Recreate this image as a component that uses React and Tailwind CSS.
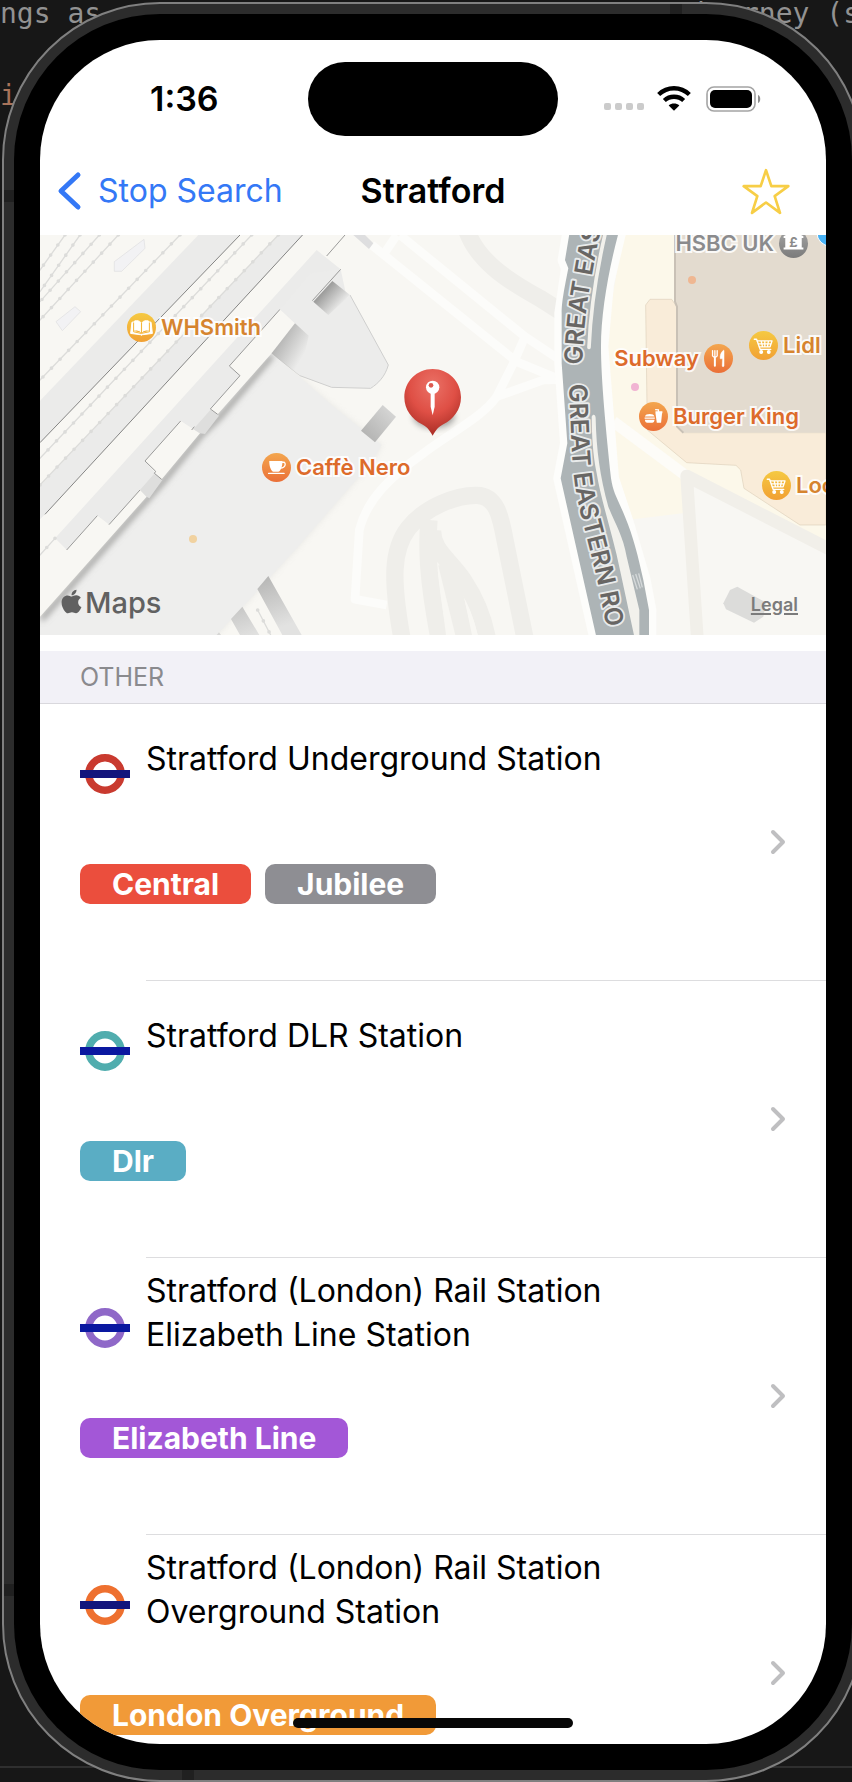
import React from "react";
import { FaApple } from "react-icons/fa";

const railLines = [
  "M105 15L30 120",
  "M150 15L30 185",
  "M208 15L30 215",
  "M265 15L30 270",
  "M450 15L30 450",
  "M665 15L30 685",
  "M745 15L30 765",
  "M75 925L30 975",
  "M683 1140L722 1215",
];

function MapDrawing() {
  return (
    <svg
      className="block h-full w-full"
      viewBox="0 0 786 400"
      preserveAspectRatio="xMidYMid slice"
      aria-hidden="true"
    >
      <defs>
        <filter id="soft" x="-20%" y="-20%" width="140%" height="140%">
          <feGaussianBlur stdDeviation="9" />
        </filter>
        <linearGradient id="stair" x1="0" y1="0" x2="0.5" y2="1">
          <stop offset="0" stopColor="#a9a9a8" />
          <stop offset="1" stopColor="#e2e2e1" />
        </linearGradient>
        <linearGradient id="kiosk" x1="0" y1="1" x2="1" y2="0">
          <stop offset="0" stopColor="#adadac" />
          <stop offset="1" stopColor="#dcdcdb" />
        </linearGradient>
        <linearGradient id="notch" x1="0.1" y1="0.3" x2="0.7" y2="0.8">
          <stop offset="0" stopColor="#8b8b8a" />
          <stop offset="1" stopColor="#ececeb" />
        </linearGradient>
        <radialGradient id="pin" cx="0.5" cy="0.25" r="0.75">
          <stop offset="0" stopColor="#ea7166" />
          <stop offset="0.55" stopColor="#df4f45" />
          <stop offset="1" stopColor="#a92d25" />
        </radialGradient>
        <path id="roadNorth" d="M157 404C158 330 166 250 178 180S198 60 226 -60" />
        <path id="roadSouth" d="M117 463C121 540 122 640 131 730S158 870 186 985S214 1120 240 1240" />
      </defs>
      <rect width="786" height="400" fill="#f8f7f3" />

      {/* Plaza, footpaths and car park loop */}
      <g transform="translate(210 -5) scale(.333333)" fill="none">
        <g stroke="#fcfcfa" strokeWidth="26" strokeLinejoin="round">
          <path d="M365 45L800 395L970 465" />
          <path d="M450 15L825 320L960 410M440 15L400 75" />
          <path d="M825 320L790 400L740 500C700 560 590 615 520 670C420 740 350 810 328 900L315 1108L410 1125" />
          <path d="M740 500L880 450L960 448" />
        </g>
        <g stroke="#efeeea" strokeWidth="52">
          <path d="M650 0C680 90 770 150 870 205L960 262" />
          <path d="M455 1220C425 1050 425 960 475 895S620 795 680 796S752 860 765 930L825 1225" />
          <path d="M537 870C530 950 532 1040 567 1225" />
          <path d="M548 900C545 960 600 990 640 1050S700 1160 712 1225" />
          <path d="M590 1000L645 1225" />
        </g>
        <path d="M563 1018L612 1215H588Z" fill="#f8f7f3" />
        <path d="M643 1105C665 1145 675 1185 683 1215H666Z" fill="#f8f7f3" />
      </g>

      {/* Station platforms */}
      <g transform="translate(-10 -5) scale(.333333)">
        <path d="M505 15H630L30 638V512Z" fill="#ebebea" />
        <path d="M745 15H820L45 853L75 880L30 925V768Z" fill="#ebebea" />
        <path d="M45 853L860 -30L990 -30L30 975V868Z" fill="#f8f7f3" />
        <path d="M253 95L342 28L345 55L275 124H253ZM78 275L135 230L152 245L97 302Z" fill="#f2f2f4" stroke="#dededf" strokeWidth="2" />
        <path
          d="M30 1165L350 800L395 750L510 610L565 555L725 370L805 437L905 525L1055 645L1030 690L800 955L560 1215H30Z"
          fill="#c4c4c2"
          filter="url(#soft)"
          opacity=".3"
        />
        <path d="M30 1165L350 800L510 610L725 370L805 437L905 525L1055 645L1030 690L800 955L560 1215H30Z" fill="#eeeeed" />
        <path
          d="M34 1168L354 806L400 754L514 614L570 560L727 376"
          fill="none"
          stroke="#8d8d8b"
          strokeWidth="13"
          filter="url(#soft)"
        />
        <path
          d="M860 60L75 925L110 960L202 857L237 884L330 780L350 800L395 750L345 693L452 573L490 600L510 610L565 555L541 537L630 437L598 408L750 238L795 280L850 320L960 250L932 118Z"
          fill="#ebebea"
        />
        <path d="M75 925L110 960L202 857L237 884L330 780L350 800L30 1160V975Z" fill="#f8f7f3" />
        <path d="M452 573L345 693L395 748L510 610ZM630 437L541 537L563 553L725 370L797 284L750 238L598 408Z" fill="#f8f7f3" />
        <path d="M510 610L490 598L541 540L567 557L525 612ZM350 800L330 780L372 732L397 750L358 805Z" fill="#dededd" />
        <g fill="none" stroke="#9a9a99" strokeWidth="3">
          <path d="M630 15L30 638M824 8L45 853" stroke="#858584" />
          <path d="M110 960L202 857M237 884L330 780M395 748L373 730L377 724L345 693L452 573M485 600L493 590" />
          <path d="M563 553L541 537L630 437L598 408L750 238" />
        </g>
        <g fill="none" stroke="#dcdcda" strokeLinecap="round">
          {railLines.map((d) => (
            <g key={d}>
              <path d={d} strokeWidth="4" />
              <path d={d} strokeWidth="11" strokeDasharray="0 37" />
            </g>
          ))}
        </g>
        <path d="M682 1077L715 1038L815 1215H757ZM603 1167L637 1130L688 1215H630ZM560 1215L567 1207L573 1215Z" fill="url(#stair)" />
      </g>
      <g transform="translate(210 -5) scale(.333333)">
        <path d="M272 118L190 213L235 255L300 195L415 405C405 440 385 460 362 475L245 472L150 437L65 370L135 280L90 238L180 130Z" fill="#ececeb" />
        <path d="M300 195L415 405C405 440 385 460 362 475L245 472L150 437L65 370" fill="none" stroke="#cfcfce" strokeWidth="3" />
        <path d="M190 215L247 153L300 195L235 255Z" fill="url(#notch)" />
        <path d="M65 370L135 280L176 317L150 437Z" fill="url(#notch)" opacity=".65" />
        <path d="M187 212L272 118M230 78L285 15" stroke="#9a9a99" strokeWidth="3" />
        <path d="M310 15H345L370 40L357 57Z" fill="#dededf" />
        <path d="M333 602L398 525L438 560L375 637Z" fill="url(#kiosk)" />
      </g>

      {/* Shops and the main road */}
      <g transform="translate(490 -5) scale(.333333)">
        <path d="M280 15H888V965L480 750L470 848L310 868L230 740V300Z" fill="#fcf8ea" />
        <path d="M347 225L360 208H425L440 230V590L460 608H888V885H810L642 775L632 720L618 706L470 698L352 600Z" fill="#f9ecd9" stroke="#ded0bb" strokeWidth="2" />
        <path d="M432 15H888V608H460L440 590V230L432 215Z" fill="#e3dbcf" />
        <path d="M435 15V215L441 230V590L460 608" fill="none" stroke="#c9c1b6" strokeWidth="6" />
        <path d="M250 575L465 735" stroke="#fdfcf8" strokeWidth="34" />
        <path d="M502 1225L470 738L900 958" fill="none" stroke="#f1efe9" strokeWidth="38" strokeLinejoin="round" />
        <path d="M580 1120L600 1080L622 1070L708 1118L700 1160L672 1178L588 1138Z" fill="#dcdcda" />
        <path
          d="M120 0L105 90L115 115L95 250V400L112 640L92 745L200 1225H357V1140L340 1050L290 880L245 745L213 350L230 160L268 0Z"
          fill="#adb4b6"
          stroke="#fdfdfb"
          strokeWidth="44"
          strokeLinejoin="round"
        />
        <path
          d="M120 0L105 90L115 115C100 190 95 220 95 250V400L112 640L92 745L200 1225H357V1140L340 1050C325 980 310 920 285 860S250 790 243 745C228 600 213 450 213 350S235 120 268 0Z"
          fill="#adb4b6"
        />
        <path d="M228 0C200 120 182 230 177 352" fill="none" stroke="#f2f1ec" strokeWidth="11" strokeLinecap="round" />
        <path d="M185 560C190 550 197 555 197 565C199 660 210 740 235 830C255 880 280 920 290 980L328 1140V1225H314L270 1020C250 920 215 820 200 730C188 670 186 620 185 560Z" fill="#f2f1ec" />
        <path d="M308 1035L322 1078M317 1032L331 1075M326 1030L337 1072" stroke="#d5d9da" strokeWidth="4" />
        <g
          fill="#686664"
          stroke="#e9ebeb"
          strokeWidth="11"
          strokeLinejoin="round"
          paintOrder="stroke"
          className="font-['Inter',sans-serif] text-[75px] font-semibold"
        >
          <text>
            <textPath href="#roadNorth">GREAT EAS</textPath>
          </text>
          <text>
            <textPath href="#roadSouth">GREAT EASTERN RO</textPath>
          </text>
        </g>
      </g>

      <circle cx="153" cy="304" r="4" fill="#f1d2a0" />
      <circle cx="652" cy="45" r="4" fill="#efb792" />
      <circle cx="595" cy="152" r="4" fill="#f1b4d3" />
      <circle cx="790" cy="-2" r="13" fill="#47b2f5" stroke="#fff" strokeWidth="1" />

      {/* Station pin */}
      <g transform="translate(210 -5) scale(.333333)">
        <ellipse cx="552" cy="560" rx="62" ry="34" fill="#000" opacity=".35" filter="url(#soft)" />
        <path d="M548 417C596 417 633 455 633 502C633 540 610 568 580 583C562 592 556 604 548 617C540 604 534 592 516 583C486 568 463 540 463 502C463 455 500 417 548 417Z" fill="url(#pin)" />
        <path d="M542 486H554V530L548 556L542 530Z" fill="#fff" />
        <circle cx="548" cy="472" r="20" fill="#fff" />
        <circle cx="543" cy="466" r="7" fill="#dd5a50" />
      </g>
    </svg>
  );
}

const glyphs = {
  book: (
    <g fill="#fff" stroke="#fff" strokeWidth="3" strokeLinejoin="round">
      <path d="M15 28L11 62L42 66L44 68L46 66L77 62L73 28L67 27V56L44 62L21 56V27Z" />
      <path d="M23 24C31 22 38 24 42 29V57C37 52 30 51 23 52ZM65 24C57 22 50 24 46 29V57C51 52 58 51 65 52Z" fill="#fff" />
      <path d="M20 29V57L43 62L68 57V29M44 30V60" fill="none" stroke="#f4b63a" strokeWidth="3" />
    </g>
  ),
  cup: (
    <g fill="#fff">
      <path d="M22 24H62C62 40 58 52 50 57H34C26 52 22 40 22 24Z" />
      <path d="M60 28H66C73 28 73 46 56 46" fill="none" stroke="#fff" strokeWidth="4" />
      <path d="M20 62H67" stroke="#fff" strokeWidth="4" strokeLinecap="round" />
    </g>
  ),
  cutlery: (
    <g fill="none" stroke="#fff" strokeLinecap="round">
      <path d="M26 20V36Q33 45 40 36V20M33 20V40" strokeWidth="4" />
      <path d="M33 42V66" strokeWidth="6" />
      <path d="M58 20C50 26 48 36 49 45H56L55 66C55 70 61 70 61 66V20Q60 18 58 20Z" fill="#fff" strokeWidth="1" />
    </g>
  ),
  cart: (
    <g fill="none" stroke="#fff" strokeWidth="4" strokeLinecap="round" strokeLinejoin="round">
      <path d="M16 25H23L34 56H66" />
      <path d="M25 30H70L64 48H31M28 39H67M37 30L41 48M48 30V48M59 30L56 48" strokeWidth="4" />
      <circle cx="37" cy="64" r="4" fill="#fff" />
      <circle cx="60" cy="64" r="4" fill="#fff" />
    </g>
  ),
  burger: (
    <g fill="#fff">
      <path d="M18 44C19 34 46 34 47 44ZM17 47H48V51H17ZM18 54H47C47 60 44 63 40 63H25C21 63 18 60 18 54Z" />
      <path d="M50 28H71V34H70L67 63H54L50 34Z" />
      <path d="M49 23L59 24V30" fill="none" stroke="#fff" strokeWidth="4" />
    </g>
  ),
  bank: (
    <g fill="#fff">
      <path d="M14 22L44 6L74 22V27H69V56H74V62H14V56H19V27H14Z" />
      <text x="44" y="56" textAnchor="middle" fill="#8b8b8b" className="font-['Inter',sans-serif] text-[40px] font-bold">
        £
      </text>
    </g>
  ),
};

const badgeFill = {
  gold: "bg-linear-to-b from-[#f5c942] to-[#f1a033]",
  orange: "bg-linear-to-b from-[#f3a64e] to-[#ea6f38]",
  gray: "bg-linear-to-b from-[#a5a5a5] to-[#7b7b7b]",
};

const places = [
  { name: "WHSmith", icon: "book", fill: "gold", place: "left-[87px] top-[78px] text-[#d6842f]" },
  { name: "Caffè Nero", icon: "cup", fill: "orange", place: "left-[222px] top-[218px] text-[#dd6b2b]" },
  { name: "Subway", icon: "cutlery", fill: "orange", place: "right-[93px] top-[109px] flex-row-reverse text-[#dd6b2b]" },
  { name: "Lidl", icon: "cart", fill: "gold", place: "left-[709px] top-[96px] text-[#d6842f]" },
  { name: "Burger King", icon: "burger", fill: "orange", place: "left-[599px] top-[167px] text-[#dd6b2b]" },
  { name: "Loc", icon: "cart", fill: "gold", place: "left-[722px] top-[236px] text-[#d6842f]" },
  { name: "HSBC UK", icon: "bank", fill: "gray", place: "right-[18px] -top-[6px] flex-row-reverse text-[#8b8b8d]" },
];

function StationMap() {
  return (
    <section aria-label="Map" className="relative h-[400px] overflow-hidden">
      <MapDrawing />
      {places.map((p) => (
        <div
          key={p.name}
          className={`absolute flex items-center gap-[5px] text-[22px] leading-[29px] font-semibold whitespace-nowrap ${p.place}`}
        >
          <span className={`size-[29px] shrink-0 rounded-full ${badgeFill[p.fill]}`}>
            <svg viewBox="0 0 88 88" className="size-full" aria-hidden="true">
              {glyphs[p.icon]}
            </svg>
          </span>
          <span className="[-webkit-text-stroke:4px_#ffffffd9] [paint-order:stroke]">{p.name}</span>
        </div>
      ))}
      <div className="absolute bottom-3 left-[18px] flex items-center text-[29px] leading-10 font-medium text-[#616161]">
        <FaApple className="mb-1 size-[27px]" aria-hidden="true" />
        Maps
      </div>
      <a
        href="#legal"
        className="absolute right-7 bottom-4 text-[18px] leading-7 font-semibold text-[#7b7b7b] underline decoration-2 underline-offset-2"
      >
        Legal
      </a>
    </section>
  );
}

const stops = [
  {
    id: "underground",
    name: "Stratford Underground Station",
    ring: "#c93a2f",
    bar: "#13157c",
    lines: [
      { name: "Central", color: "bg-[#eb4e3d]" },
      { name: "Jubilee", color: "bg-[#8e8e93]" },
    ],
  },
  {
    id: "dlr",
    name: "Stratford DLR Station",
    ring: "#50adae",
    bar: "#0a18a0",
    lines: [{ name: "Dlr", color: "bg-[#5aadc4]" }],
  },
  {
    id: "elizabeth",
    name: "Stratford (London) Rail Station Elizabeth Line Station",
    ring: "#8f68c8",
    bar: "#0a18a0",
    lines: [{ name: "Elizabeth Line", color: "bg-[#a357d7]" }],
  },
  {
    id: "overground",
    name: "Stratford (London) Rail Station Overground Station",
    ring: "#ee702f",
    bar: "#13157c",
    lines: [{ name: "London Overground", color: "bg-[#f19a38]" }],
  },
];

function Roundel({ ring, bar }) {
  return (
    <svg viewBox="0 0 50 40" className="mt-[50px] h-10 w-[50px] shrink-0" aria-hidden="true">
      <circle cx="25" cy="20" r="16.2" fill="none" stroke={ring} strokeWidth="7.4" />
      <rect y="16" width="50" height="8" fill={bar} />
    </svg>
  );
}

function StopRow({ stop, last }) {
  return (
    <li>
      <a href={`#${stop.id}`} className="flex pl-10 text-black">
        <div className="flex min-w-0 flex-1 flex-col">
          <div className="flex gap-4">
            <Roundel ring={stop.ring} bar={stop.bar} />
            <h3 className="flex min-h-[110px] max-w-[500px] items-center text-[32px] leading-11">{stop.name}</h3>
          </div>
          <div className="mt-[50px] flex gap-3.5">
            {stop.lines.map((line) => (
              <span
                key={line.name}
                className={`rounded-[10px] px-8 text-[30px] leading-10 font-bold text-white ${line.color}`}
              >
                {line.name}
              </span>
            ))}
          </div>
          {last ? <div className="h-[9px]" /> : <div className="mt-[76px] ml-[66px] h-px bg-[#dddddf]" />}
        </div>
        <div className="flex flex-col">
          <svg
            viewBox="0 0 16 26"
            className="mt-[125px] mr-10 h-[26px] w-4"
            fill="none"
            stroke="#bfbfc1"
            strokeWidth="4"
            strokeLinecap="round"
            strokeLinejoin="round"
            aria-hidden="true"
          >
            <path d="M3 3L13 13L3 23" />
          </svg>
          {last ? null : <div className="mt-auto h-px bg-[#dddddf]" />}
        </div>
      </a>
    </li>
  );
}

function StatusBar() {
  return (
    <div className="flex h-[119px] items-center justify-between pb-0.5">
      <div className="w-[268px] pl-[110px] text-[34px] leading-10 font-semibold">1:36</div>
      <div className="h-[74px] w-[250px] rounded-full bg-black" />
      <div className="flex w-[268px] items-center justify-end pr-[65px]">
        <div className="mt-4 mr-[13px] flex gap-1">
          <i className="size-[7px] rounded-xs bg-[#cbcbcb]" />
          <i className="size-[7px] rounded-xs bg-[#cbcbcb]" />
          <i className="size-[7px] rounded-xs bg-[#cbcbcb]" />
          <i className="size-[7px] rounded-xs bg-[#cbcbcb]" />
        </div>
        <svg viewBox="0 0 102 74" className="mr-[15px] h-[25px] w-[34px]" aria-hidden="true">
          <g fill="none" stroke="#000" strokeWidth="13">
            <path d="M5 25C31 0 71 0 97 25" />
            <path d="M22 43C38 28 64 28 80 43" />
          </g>
          <path d="M51 74L35 58C44 50 58 50 67 58Z" fill="#000" />
        </svg>
        <svg viewBox="0 0 55 26" className="h-[26px] w-[55px]" aria-hidden="true">
          <rect x="1" y="1" width="48" height="24" rx="7" fill="none" stroke="#a4a4a4" strokeWidth="1.6" />
          <rect x="4" y="4" width="42" height="18" rx="5" />
          <path d="M52 9C55 10 55 16 52 17Z" fill="#8f8f8f" />
        </svg>
      </div>
    </div>
  );
}

function NavBar() {
  return (
    <nav className="grid h-[76px] grid-cols-[1fr_auto_1fr] items-center px-4 pb-3 leading-11">
      <button type="button" className="flex items-center gap-4 justify-self-start text-[32px] text-[#3478f6]">
        <svg
          viewBox="0 0 26 40"
          className="h-10 w-[26px]"
          fill="none"
          stroke="currentColor"
          strokeWidth="5"
          strokeLinecap="round"
          strokeLinejoin="round"
          aria-hidden="true"
        >
          <path d="M22 4L5 20L22 36" />
        </svg>
        Stop Search
      </button>
      <h1 className="text-[34px] font-semibold">Stratford</h1>
      <button type="button" aria-label="Add to favourites" className="mr-5 justify-self-end">
        <svg
          viewBox="0 0 144 140"
          className="h-[47px] w-12"
          fill="none"
          stroke="#f7ce46"
          strokeWidth="8"
          strokeLinejoin="round"
          aria-hidden="true"
        >
          <path d="M72 6L88 54H139L98 84L114 134L72 103L30 134L46 84L5 54H56Z" />
        </svg>
      </button>
    </nav>
  );
}

export default function App() {
  return (
    <div className="relative min-h-screen overflow-hidden bg-[#171717] pt-0.5 pl-0.5 font-['Inter','Liberation_Sans',sans-serif]">
      <div
        aria-hidden="true"
        className="absolute inset-0 font-['DejaVu_Sans_Mono',monospace] text-[28px] leading-8 text-[#929292]"
      >
        <div className="-mr-2 flex -translate-y-0.5 justify-between">
          <span>ngs as</span>
          <span>journey (s</span>
        </div>
        <div className="mt-12 text-[#a8735a]">i</div>
        <div className="absolute inset-x-0 bottom-3.5 h-0.5 bg-[#2f2f2f]" />
      </div>

      <div className="relative -mr-3 rounded-[158px] border-2 border-[#808080] bg-[#2c2c2c] p-2.5">
        <div className="absolute top-[186px] left-0 h-3 w-2.5 bg-[#202020]" />
        <div className="absolute bottom-[184px] left-0 h-3 w-2.5 bg-[#202020]" />
        <div className="absolute top-0 right-[180px] h-2.5 w-3 bg-[#202020]" />
        <div className="absolute bottom-0 left-[178px] h-2.5 w-3 bg-[#202020]" />
        <div className="relative rounded-[146px] bg-black p-[26px]">
          <main className="relative overflow-hidden rounded-[120px] bg-white text-black">
            <StatusBar />
            <NavBar />
            <StationMap />
            <section className="mt-4">
              <h2 className="border-b border-[#d9d8dd] bg-[#f2f1f7] pl-10 text-[25px] leading-[52px] text-[#8a8a8e]">
                OTHER
              </h2>
              <ul>
                {stops.map((stop, i) => (
                  <StopRow key={stop.id} stop={stop} last={i === stops.length - 1} />
                ))}
              </ul>
            </section>
            <div className="absolute bottom-4 left-1/2 h-2.5 w-[280px] -translate-x-1/2 rounded-full bg-[#070707]" />
          </main>
        </div>
      </div>
    </div>
  );
}
